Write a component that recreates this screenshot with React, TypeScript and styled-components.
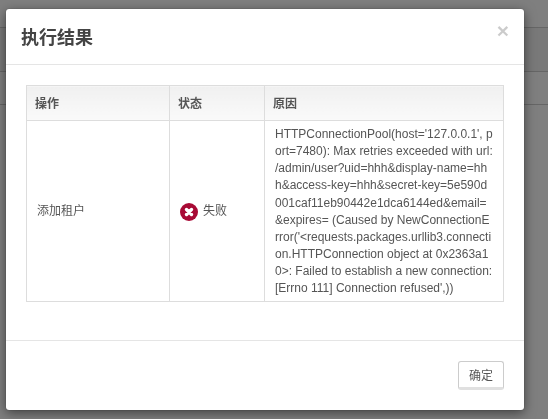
import React from 'react';
import styled, { createGlobalStyle } from 'styled-components';

const GlobalStyle = createGlobalStyle`
  html, body {
    margin: 0;
    padding: 0;
    height: 100%;
    overflow: hidden;
    background: #fff;
    font-family: "Liberation Sans", "Noto Sans CJK SC", sans-serif;
    font-size: 12px;
    color: #555;
  }
`;

const PageBehind = styled.div`
  display: flex;
  flex-direction: column;
  width: 548px;
  height: 419px;
`;

const BehindRow = styled.div<{ $height: number; $shade?: boolean }>`
  height: ${(p) => p.$height}px;
  background: ${(p) => (p.$shade ? '#f2f2f2' : '#fff')};
  border-bottom: 1px solid #ccc;
  box-sizing: border-box;
`;

const Backdrop = styled.div`
  position: fixed;
  inset: 0;
  background: rgba(0, 0, 0, 0.5);
`;

const Modal = styled.div`
  position: absolute;
  left: 6px;
  top: 9px;
  width: 518px;
  height: 401px;
  box-sizing: border-box;
  display: flex;
  flex-direction: column;
  background: #fff;
  border-radius: 3px;
  box-shadow: 0 3px 12px rgba(0, 0, 0, 0.5), 0 0 1px rgba(0, 0, 0, 0.6);
`;

const Header = styled.div`
  height: 56px;
  box-sizing: border-box;
  display: flex;
  align-items: center;
  justify-content: space-between;
  padding: 0 15px 2px 15px;
  border-bottom: 1px solid #e5e5e5;
`;

const Title = styled.h4`
  margin: 0;
  font-size: 18px;
  font-weight: 700;
  color: #444;
`;

const CloseButton = styled.span`
  align-self: flex-start;
  margin-top: 12px;
  font-size: 21px;
  line-height: 20px;
  font-weight: 700;
  color: #000;
  opacity: 0.2;
`;

const Body = styled.div`
  flex: 1;
  padding: 20px;
`;

const Table = styled.table`
  width: 478px;
  table-layout: fixed;
  border-collapse: collapse;
  font-size: 12px;
`;

const HeadCell = styled.th`
  height: 35px;
  box-sizing: border-box;
  padding: 0 8px 2px;
  text-align: left;
  font-weight: 700;
  color: #555;
  background: linear-gradient(to bottom, #f0f0f0, #fafafa);
  border: 1px solid #ddd;
`;

const Cell = styled.td`
  padding: 5px 10px 4px;
  border: 1px solid #ddd;
  color: #555;
  line-height: 1.42857;
  word-break: break-all;
`;

const StatusCell = styled(Cell)`
  padding-top: 10px;
  padding-bottom: 4px;
`;

const StatusWrap = styled.span`
  display: inline-flex;
  align-items: center;
  gap: 5px;
`;

const Footer = styled.div`
  height: 70px;
  box-sizing: border-box;
  display: flex;
  justify-content: flex-end;
  align-items: flex-start;
  padding: 20px;
  border-top: 1px solid #e5e5e5;
`;

const Button = styled.button`
  width: 46px;
  height: 29px;
  padding: 0 0 1px;
  font: inherit;
  color: #555;
  background: #fff;
  border: 1px solid #ccc;
  border-bottom: 3px solid #e0e0e0;
  border-radius: 3px;
`;

const FailIcon = () => (
  <svg width="18" height="18" viewBox="0 0 18 18">
    <circle cx="9" cy="9" r="9" fill="#a80a35" />
    <path d="M6.5 6.5l5 5M11.5 6.5l-5 5" stroke="#fff" strokeWidth="3.4" strokeLinecap="round" />
  </svg>
);

const reason =
  "HTTPConnectionPool(host='127.0.0.1', port=7480): Max retries exceeded with url: /admin/user?uid=hhh&display-name=hhh&access-key=hhh&secret-key=5e590d001caf11eb90442e1dca6144ed&email=&expires= (Caused by NewConnectionError('<requests.packages.urllib3.connection.HTTPConnection object at 0x2363a10>: Failed to establish a new connection: [Errno 111] Connection refused',))";

const App: React.FunctionComponent = () => {
  return (
    <>
      <GlobalStyle />
      <PageBehind>
        <BehindRow $height={28} />
        <BehindRow $height={44} $shade />
        <BehindRow $height={33} />
      </PageBehind>
      <Backdrop />
      <Modal>
        <Header>
          <Title>执行结果</Title>
          <CloseButton>×</CloseButton>
        </Header>
        <Body>
          <Table>
            <colgroup>
              <col style={{ width: 143 }} />
              <col style={{ width: 95 }} />
              <col />
            </colgroup>
            <thead>
              <tr>
                <HeadCell>操作</HeadCell>
                <HeadCell>状态</HeadCell>
                <HeadCell>原因</HeadCell>
              </tr>
            </thead>
            <tbody>
              <tr>
                <Cell>添加租户</Cell>
                <StatusCell>
                  <StatusWrap>
                    <FailIcon />
                    失败
                  </StatusWrap>
                </StatusCell>
                <Cell>{reason}</Cell>
              </tr>
            </tbody>
          </Table>
        </Body>
        <Footer>
          <Button>确定</Button>
        </Footer>
      </Modal>
    </>
  );
};

export default App;
